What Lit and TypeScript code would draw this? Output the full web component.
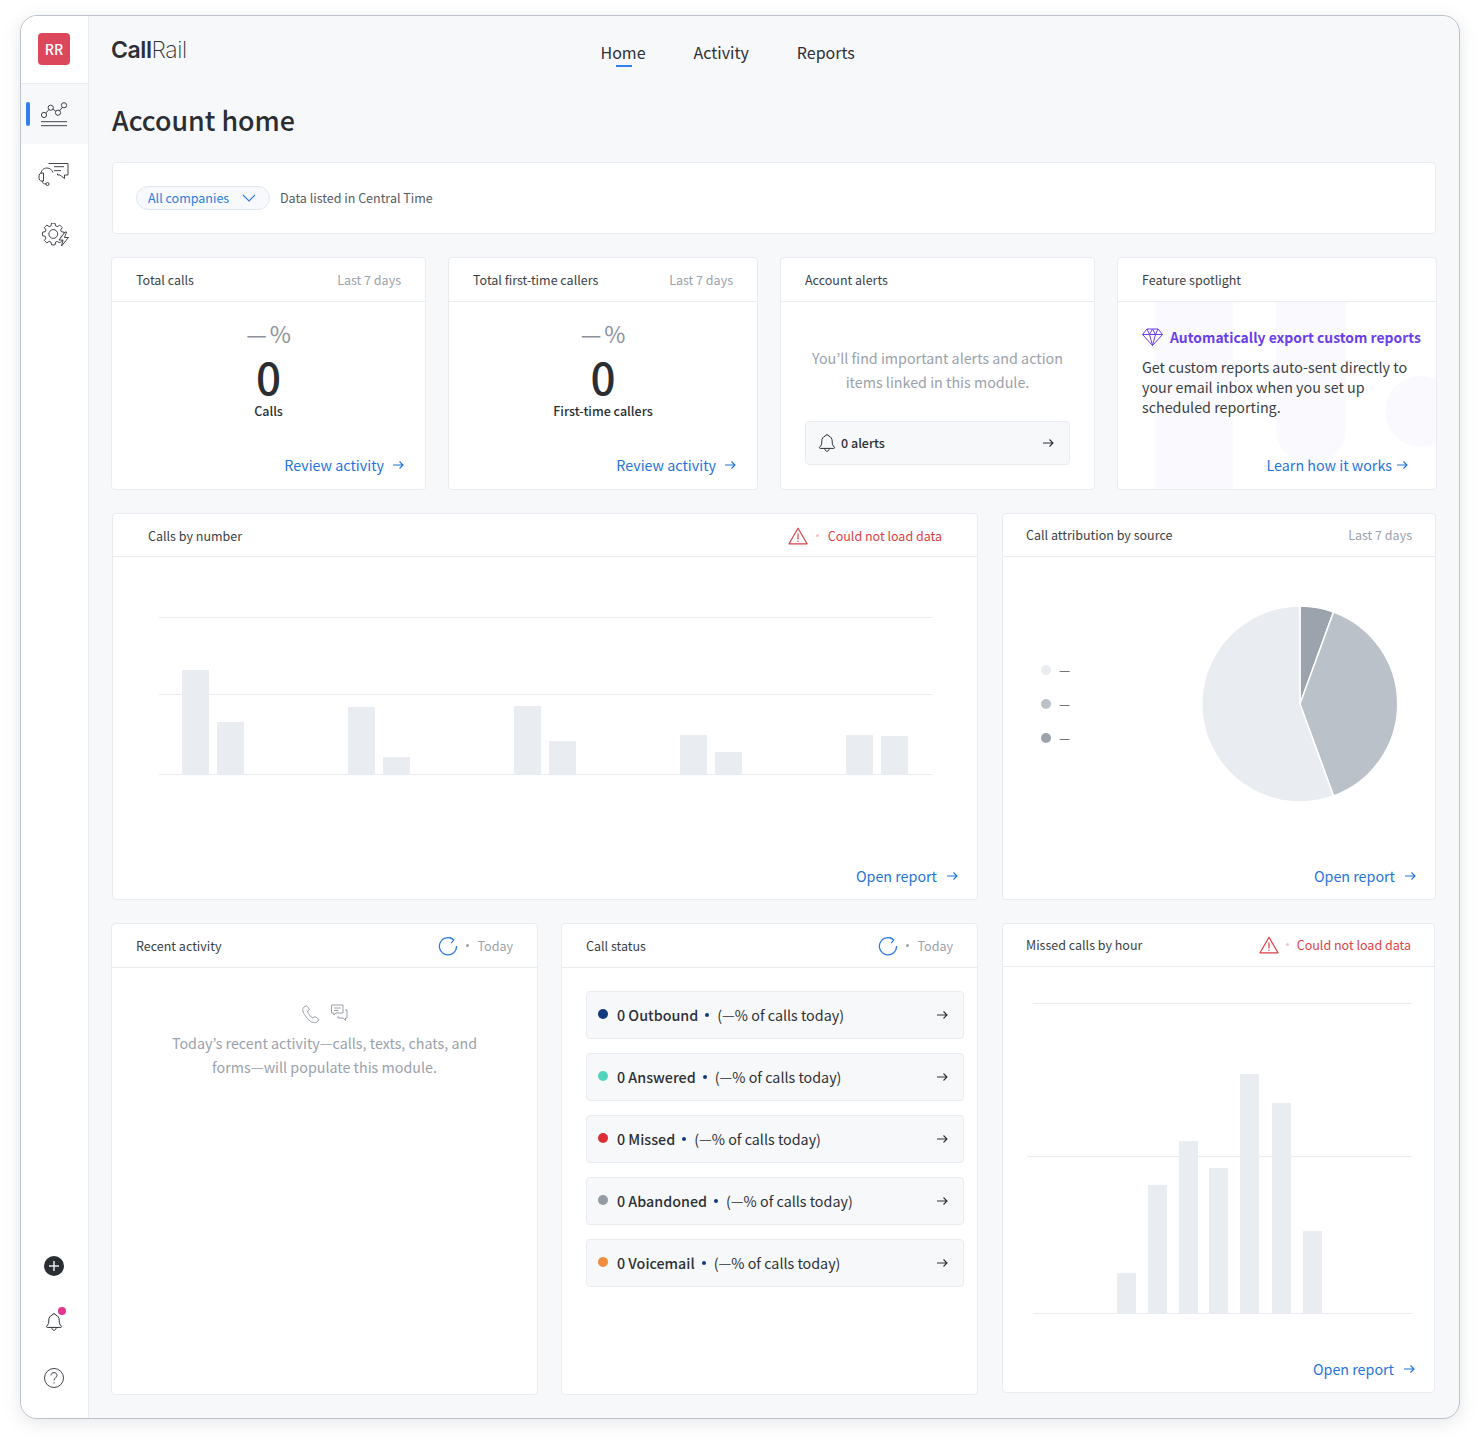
import { LitElement, html, css, svg } from "lit";
import { customElement } from "lit/decorators.js";

const arrow = (w = 12) => html`<svg class="arrow" width=${w} height="10" viewBox="0 0 12 10" fill="none" stroke="currentColor" stroke-width="1.1"><path d="M1 5h10M7.500 1.500 11 5 7.500 8.500"/></svg>`;
const refresh = html`<svg width="20" height="20" viewBox="0 0 20 20" fill="none" stroke="#2b7de0" stroke-width="1.3"><path d="M15.800 3.900A8.600 8.600 0 1 0 18.600 10"/><path d="M11.500 1.200l4.300 2.700-2.700 3.300" stroke-width="1.100"/></svg>`;
const warn = html`<svg width="20" height="18" viewBox="0 0 20 18" fill="none" stroke="#dd3f46" stroke-width="1.2"><path d="M10 1.200 19 16.800H1z" stroke-linejoin="round"/><path d="M10 6.500v6M10 13.800v1.200"/></svg>`;
const bellPath = "M10 1.700c.9 0 1.500.5 1.600 1.300 2.500.7 3.600 2.800 3.600 5.200 0 3.200.6 4.400 2.200 6 .4.500.1 1.200-.6 1.200H3.200c-.7 0-1-.7-.6-1.200 1.600-1.600 2.200-2.800 2.200-6 0-2.400 1.100-4.500 3.600-5.200.1-.8.700-1.300 1.600-1.300zM7.800 15.400c0 1.700 1 2.900 2.200 2.900s2.200-1.200 2.200-2.900";

// Outline of an 8-tooth gear, used by the settings icon in the sidebar.
function gearPath(cx: number, cy: number, ro: number, ri: number, teeth = 8) {
  const pts: string[] = [];
  const step = (Math.PI * 2) / teeth;
  for (let t = 0; t < teeth; t++) {
    const a = t * step - Math.PI / 2;
    const spots: [number, number][] = [
      [ri, a - step * 0.36], [ro, a - step * 0.2], [ro, a + step * 0.2], [ri, a + step * 0.36],
    ];
    for (const [r, an] of spots) pts.push(`${(cx + r * Math.cos(an)).toFixed(2)} ${(cy + r * Math.sin(an)).toFixed(2)}`);
  }
  return "M" + pts.join("L") + "Z";
}

interface Stat { label: string; dot: string; pct: string }
const statuses: Stat[] = [
  { label: "0 Outbound", dot: "#123a7c", pct: "(—% of calls today)" },
  { label: "0 Answered", dot: "#52d3bd", pct: "(—% of calls today)" },
  { label: "0 Missed", dot: "#dd2f36", pct: "(—% of calls today)" },
  { label: "0 Abandoned", dot: "#959ca6", pct: "(—% of calls today)" },
  { label: "0 Voicemail", dot: "#f08d3c", pct: "(—% of calls today)" },
];

const callBars = [
  [24, 104], [59, 52], [190, 67], [225, 17], [356, 68], [391, 33], [522, 39], [557, 22], [688, 39], [723, 38],
];
const missBars = [
  [91, 40], [122, 128], [153, 172], [183, 145], [214, 239], [246, 210], [277, 82],
];

@customElement("app-root")
export class AppRoot extends LitElement {
  static styles = css`
    :host { display: block; height: 1444px; box-sizing: border-box; padding: 15px 20px 25px 20px; background: #fff;
      font-family: "Noto Sans CJK JP", "Noto Sans", sans-serif; color: #2c3036; font-size: 12.5px; line-height: 20px; }
    * { box-sizing: border-box; }
    .win { height: 1404px; display: flex; border: 1px solid #bcc2cc; border-radius: 17px; overflow: hidden; background: #f7f8fa;
      box-shadow: 0 4px 18px rgba(60,70,90,.13); }
    .side { width: 68px; flex: none; background: #fff; border-right: 1px solid #e8ebf0; display: flex; flex-direction: column; }
    .avatar-wrap { height: 68px; display: flex; align-items: center; justify-content: center; border-bottom: 1px solid #e8ebf0; padding: 0 1px 1px 0; }
    .avatar { width: 32px; height: 32px; border-radius: 4px; background: #dd475c; color: #fff; font-size: 14px; font-weight: 500; display: flex; align-items: center; justify-content: center; }
    .nav-item { height: 60px; display: flex; align-items: center; justify-content: center; position: relative; padding-right: 1px; }
    .nav-item.active { background: #f7f8fa; }
    .nav-item.active::before { content: ""; position: absolute; left: 5px; top: 18px; width: 4px; height: 24px; border-radius: 2px; background: #2f80ed; }
    .nav-item.gear { margin-top: 2px; }
    .spacer { flex: 1; }
    .bottom { display: flex; flex-direction: column; align-items: center; gap: 36px; padding: 0 1px 30px 0; }
    .bell { position: relative; height: 20px; }
    .bell i { position: absolute; left: 14px; top: -5px; width: 8px; height: 8px; border-radius: 50%; background: #e0368f; }
    .main { flex: 1; min-width: 0; padding: 0 22px 0 22px; display: flex; flex-direction: column; }
    .top { height: 72px; position: relative; display: flex; justify-content: flex-start; }
    .logo { font-family: Inter, sans-serif; font-size: 23px; line-height: 28px; letter-spacing: -.4px; margin-top: 20px; color: #2c3036; width: 489.5px; flex: none; }
    .logo b { font-weight: 600; } .logo span { font-weight: 200; }
    .tabs { display: flex; gap: 48px; padding-top: 25px; font-size: 16px; line-height: 22px; color: #2c3036; }
    .tab { position: relative; }
    .tab.on::after { content: ""; position: absolute; left: 15px; top: 24px; width: 16px; height: 2px; background: #2f80ed; }
    h1 { margin: 0; font-size: 26.800px; line-height: 40px; font-weight: 500; height: 74px; padding: 12px 0 0 1px; color: #2a2e33; }
    .card { background: #fff; border: 1px solid #e8ebf0; border-radius: 4px; display: flex; flex-direction: column; position: relative; overflow: hidden; }
    .filter { margin: 0 1px; height: 72px; flex: none; flex-direction: row; align-items: center; padding: 0 23px; gap: 10px; }
    .pill { height: 24px; width: 134px; border: 1px solid #dfe6f0; border-radius: 12px; background: #f7f9fc; display: flex; align-items: center; justify-content: space-between; padding: 0 13px 0 11px; color: #2b7de0; font-size: 12.5px; }
    .muted { font-size: 12.500px; color: #565c65; }
    .row { display: grid; }
    .r2 { margin-top: 23px; height: 233px; grid-template-columns: 315px 310px 315px 320px; column-gap: 22px; }
    .r3 { margin-top: 23px; height: 387px; margin-left: 1px; grid-template-columns: 866px 434px; column-gap: 24px; }
    .r4 { margin-top: 23px; height: 472px; grid-template-columns: 427px 417px 434px; column-gap: 23px; }
    .r4 > :last-child { margin-left: 1px; height: 470px; }
    .hd { height: 44px; flex: none; border-bottom: 1px solid #e8ebf0; display: flex; align-items: center; justify-content: space-between; padding: 0 24px; font-size: 12.500px; color: #3a3f46; }
    .hd.short { height: 43px; padding: 0 23px 1px; }
    .hd.wide { height: 43px; padding: 1px 35px 0; }
    .hd .r { color: #9aa1ab; display: flex; align-items: center; }
    .hd .sep { width: 3px; height: 3px; border-radius: 50%; background: #9aa1ab; margin: 0 9px 0 8px; }
    .hd .err { color: #dd3f46; }
    .hd .err .sep { background: #f5c3c5; margin: 0 9px 0 8px; }
    .r4 .hd .err .sep { margin: 0 8px 0 7px; }
    .stat { flex: 1; padding: 18px 24px 13px; display: flex; flex-direction: column; align-items: center; }
    .pct { font-size: 23px; line-height: 26px; color: #8b929c; display: flex; align-items: center; gap: 3px; }
    .num { font-size: 44px; line-height: 48px; font-weight: 500; margin-top: 6px; color: #2a2e33; }
    .cap { font-size: 12.500px; line-height: 20px; font-weight: 500; margin-top: 1px; color: #2c3036; }
    .link { color: #1f74dc; font-size: 14.300px; line-height: 22px; display: flex; align-items: center; gap: 9px; justify-content: flex-end; margin-top: auto; align-self: flex-end; }
    .link .arrow { color: #1f74dc; }
    .stat .link { margin-right: -3px; gap: 8px; }
    .alerts { flex: 1; padding: 44px 24px 24px; display: flex; flex-direction: column; }
    .empty { color: #9aa1ab; font-size: 14.300px; line-height: 24px; text-align: center; }
    .alert-btn { margin-top: auto; height: 44px; background: #f7f8fa; border: 1px solid #e8ebf0; border-radius: 4px; display: flex; align-items: center; padding: 0 15px 0 11px; font-weight: 500; font-size: 12.500px; gap: 4px; }
    .alert-btn .arrow, .st .arrow { margin-left: auto; }
    .spot { flex: 1; padding: 24px 14px 13px 24px; display: flex; flex-direction: column; position: relative; }
    .deco { position: absolute; background: #fafafe; }
    .d1 { left: 37px; top: 0; width: 78px; bottom: 0; }
    .d2 { left: 158px; top: 0; width: 70px; height: 162px; border-radius: 0 0 35px 35px; }
    .d3 { left: 267px; top: 74px; width: 71px; height: 71px; border-radius: 50%; }
    .spot > :not(.deco) { position: relative; }
    .spot-t { color: #6a3fe8; font-size: 13.900px; line-height: 22px; font-weight: 600; display: flex; align-items: center; gap: 7px; white-space: nowrap; }
    .spot-t svg { flex: none; }
    .spot-b { font-size: 14.300px; line-height: 20px; color: #3a3f46; margin-top: 9px; width: 275px; }
    .spot .link { gap: 4px; margin-right: 14px; }
    .chart-body { flex: 1; display: flex; flex-direction: column; padding: 0 24px 12px 24px; min-height: 0; }
    .chart-body.tight { padding-left: 23px; padding-right: 23px; }
    .chart-body svg.fill { display: block; flex: none; }
    .chart-body .link { margin-right: -5px; }
    .chart-body.tight .link { margin-right: -4px; }
    .calls-chart { margin: 60px 0 0 -1px; }
    .miss-chart { margin-top: 36px; }
    .pie-wrap { display: flex; height: 250px; padding-top: 48px; flex: none; }
    .pie { flex: none; }
    .legend { width: 174px; padding: 55px 0 0 14px; display: flex; flex-direction: column; gap: 14px; flex: none; }
    .legend div { display: flex; align-items: center; gap: 8px; height: 20px; color: #555; font-size: 12.500px; }
    .legend i { width: 10px; height: 10px; border-radius: 50%; }
    .recent { padding: 36px 50px; text-align: center; }
    .recent .ic { display: flex; justify-content: center; gap: 9px; height: 22px; margin-bottom: 5px; }
    .status { padding: 23px 13px 0 24px; display: flex; flex-direction: column; gap: 14px; }
    .st { height: 48px; background: #f7f8fa; border: 1px solid #e8ebf0; border-radius: 4px; display: flex; align-items: center; padding: 0 15px 0 11px; font-size: 14.300px; color: #2c3036; }
    .st .dot { width: 10px; height: 10px; border-radius: 50%; margin-right: 9px; margin-top: -2px; }
    .st b { font-weight: 500; }
    .st .mid { width: 4px; height: 4px; border-radius: 50%; background: #123a7c; margin: 0 8px 0 7px; }
  `;

  private card(title: string, right: unknown, body: unknown, hd = "") {
    return html`<section class="card"><div class="hd ${hd}"><span>${title}</span>${right}</div>${body}</section>`;
  }
  private stat(cap: string) {
    return html`<div class="stat"><div class="pct"><span>—</span><span>%</span></div><div class="num">0</div><div class="cap">${cap}</div>
      <div class="link">Review activity ${arrow()}</div></div>`;
  }

  render() {
    const days = html`<span class="r">Last 7 days</span>`;
    const today = html`<span class="r">${refresh}<i class="sep"></i>Today</span>`;
    const err = html`<span class="r err">${warn}<i class="sep"></i>Could not load data</span>`;
    return html`<div class="win">
      <aside class="side">
        <div class="avatar-wrap"><div class="avatar">RR</div></div>
        <div class="nav-item active"><svg width="28" height="26" viewBox="0 0 28 26" fill="none" stroke="#2c3036" stroke-width=".9"><circle cx="4" cy="14" r="2.600"/><circle cx="10.700" cy="6.700" r="2.600"/><circle cx="18" cy="11.700" r="2.600"/><circle cx="24" cy="4.300" r="2.600"/><path d="M5.800 12.100 8.900 8.600M12.900 8.200l2.900 2M19.700 9.700l2.700-3.400M1 20.700h26M1 24.700h26"/></svg></div>
        <div class="nav-item"><svg width="32" height="24" viewBox="0 0 32 24" fill="none" stroke="#2c3036" stroke-width=".9"><path d="M10.500 1.500h19.500v11.500h-3.500v3.500L22 13h-2.500v-1.500"/><path d="M16 4.700h10M16 8.700h7"/><path d="M3 12c0-3.500 2.500-6 6-6 3 0 5.200 2 5.800 4.500M3.500 11h2v8h-2C2 19 1 17.700 1 15s1-4 2.500-4zM4 19c.3 2 2 3 4 3"/><circle cx="9.500" cy="22" r="1.500"/></svg></div>
        <div class="nav-item gear"><svg width="30" height="26" viewBox="0 0 30 26" fill="none" stroke="#2c3036" stroke-width=".9" stroke-linejoin="round"><path d=${gearPath(14.300, 11, 11, 8.400)}/><circle cx="14.300" cy="11" r="4.400"/><path fill="#fff" d="M26 9 20 17h4l-1.500 6 7-8.500h-4L27.500 9z"/></svg></div>
        <div class="spacer"></div>
        <div class="bottom">
          <svg width="20" height="20" viewBox="0 0 20 20"><circle cx="10" cy="10" r="10" fill="#2a2e33"/><path d="M10 5v10M5 10h10" stroke="#e8eaec" stroke-width="1.500"/></svg>
          <div class="bell"><svg width="20" height="20" viewBox="0 0 20 20" fill="none" stroke="#2c3036" stroke-width="1"><path d=${bellPath}/></svg><i></i></div>
          <svg width="20" height="20" viewBox="0 0 20 20" fill="none" stroke="#2c3036" stroke-width=".9"><circle cx="10" cy="10" r="9.500"/><path d="M7 7.500C7 5.700 8.300 4.600 10 4.600s3 1.100 3 2.700c0 2.500-3 2.500-3 5.200M10 14.300v1.200"/></svg>
        </div>
      </aside>
      <main class="main">
        <header class="top">
          <div class="logo"><b>Call</b><span>Rail</span></div>
          <nav class="tabs"><span class="tab on">Home</span><span class="tab">Activity</span><span class="tab">Reports</span></nav>
        </header>
        <h1>Account home</h1>
        <section class="card filter">
          <div class="pill"><span>All companies</span><svg width="14" height="8" viewBox="0 0 14 8" fill="none" stroke="#2b7de0" stroke-width="1.100"><path d="M1 1l6 6 6-6"/></svg></div>
          <span class="muted">Data listed in Central Time</span>
        </section>
        <div class="row r2">
          ${this.card("Total calls", days, this.stat("Calls"))}
          ${this.card("Total first-time callers", days, this.stat("First-time callers"))}
          ${this.card("Account alerts", "", html`<div class="alerts"><div class="empty">You’ll find important alerts and action items linked in this module.</div>
            <div class="alert-btn"><svg width="20" height="20" viewBox="0 0 20 20" fill="none" stroke="#2c3036" stroke-width="1"><path d=${bellPath}/></svg>0 alerts ${arrow()}</div></div>`)}
          ${this.card("Feature spotlight", "", html`<div class="spot"><i class="deco d1"></i><i class="deco d2"></i><i class="deco d3"></i>
            <div class="spot-t"><svg width="21" height="18" viewBox="0 0 21 18" fill="none" stroke="#6a3fe8" stroke-width="1"><path d="M5 1h11l4.500 5.500L10.500 17.500.5 6.500zM.5 6.500h20M5 1l2.500 5.500 3 11 3-11L16 1M7.500 6.500 10.500 1l3 5.500"/></svg>Automatically export custom reports</div>
            <div class="spot-b">Get custom reports auto-sent directly to your email inbox when you set up scheduled reporting.</div>
            <div class="link">Learn how it works ${arrow()}</div></div>`)}
        </div>
        <div class="row r3">
          ${this.card("Calls by number", err, html`<div class="chart-body">
              <svg class="fill calls-chart" width="818" height="218" viewBox="0 0 818 218">
                ${[0, 77, 157].map((y) => svg`<rect x="23" y=${y} width="773" height="1" fill="#e8ebf0"/>`)}
                ${callBars.map(([x, h]) => svg`<rect x=${x + 22} y=${157 - h} width="27" height=${h} fill="#e9ecf1"/>`)}
              </svg>
              <div class="link">Open report ${arrow()}</div>
            </div>`, "wide")}
          ${this.card("Call attribution by source", days, html`<div class="chart-body">
              <div class="pie-wrap">
                <div class="legend">
                  <div><i style="background:#e9ecf1"></i>—</div><div><i style="background:#bbc1c9"></i>—</div><div><i style="background:#9ca3ac"></i>—</div>
                </div>
                <svg class="pie" width="198" height="198" viewBox="-99 -99 198 198">
                  <path d="M0 0V-98A98 98 0 0 1 33.500 -92z" fill="#9ca3ac" stroke="#fff" stroke-width="1.500"/>
                  <path d="M0 0 33.500 -92A98 98 0 0 1 33.500 92z" fill="#bbc1c9" stroke="#fff" stroke-width="1.500"/>
                  <path d="M0 0 33.500 92A98 98 0 1 1 0 -98z" fill="#e9ecf1" stroke="#fff" stroke-width="1.500"/>
                </svg>
              </div>
              <div class="link">Open report ${arrow()}</div>
            </div>`, "short")}
        </div>
        <div class="row r4">
          ${this.card("Recent activity", today, html`<div class="recent"><div class="ic">
              <svg width="20" height="20" viewBox="0 0 20 20" fill="none" stroke="#9aa1ab" stroke-width="1"><path d="M5.500 1.500 3 3c-2 1.500-1.500 4 .500 7.500s5 7 8.500 8c2 .500 3.500 0 5-1.500l1-1.500-4-3-2 1.500c-2-.500-5-4-5.500-7L8.500 5.500z"/></svg>
              <svg width="18" height="18" viewBox="0 0 18 18" fill="none" stroke="#9aa1ab" stroke-width="1"><path d="M1.500 1h11.500v8H6l-2 2v-2H1.500zM4 4h6.500M4 6.500h4.500M15 6h2v8h-1.500v2.500L13 14H8v-2"/></svg>
            </div><div class="empty">Today’s recent activity—calls, texts, chats, and forms—will populate this module.</div></div>`)}
          ${this.card("Call status", today, html`<div class="status">${statuses.map((s) => html`<div class="st"><i class="dot" style="background:${s.dot}"></i><b>${s.label}</b><i class="mid"></i><span>${s.pct}</span>${arrow()}</div>`)}</div>`)}
          ${this.card("Missed calls by hour", err, html`<div class="chart-body tight">
              <svg class="fill miss-chart" width="386" height="312" viewBox="0 0 386 312">
                <rect x="7" y="0" width="379" height="1" fill="#e8ebf0"/><rect x="1" y="153" width="385" height="1" fill="#e8ebf0"/><rect x="7" y="310" width="379" height="1" fill="#e8ebf0"/>
                ${missBars.map(([x, h]) => svg`<rect x=${x} y=${310 - h} width="19" height=${h} fill="#e9ecf1"/>`)}
              </svg>
              <div class="link">Open report ${arrow()}</div>
            </div>`, "short")}
        </div>
      </main>
    </div>`;
  }
}
